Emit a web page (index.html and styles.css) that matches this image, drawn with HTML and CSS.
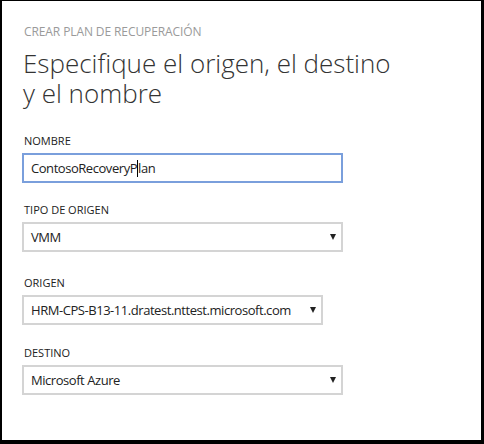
FILE: index.html
```html
<!DOCTYPE html>
<html lang="es">
<head>
<meta charset="utf-8">
<title>Crear plan de recuperación</title>
<link rel="stylesheet" href="styles.css">
</head>
<body>
<div class="frame">
  <div class="eyebrow">CREAR PLAN DE RECUPERACIÓN</div>
  <h1 class="title">Especifique el origen, el destino<br>y el nombre</h1>

  <div class="field f-nombre">
    <div class="label">NOMBRE</div>
    <div class="input focused">ContosoRecoveryP<span class="caret"></span>lan</div>
  </div>

  <div class="field f-tipo">
    <div class="label">TIPO DE ORIGEN</div>
    <div class="select"><span>VMM</span><span class="arrow"></span></div>
  </div>

  <div class="field f-origen">
    <div class="label">ORIGEN</div>
    <div class="select narrow"><span>HRM-CPS-B13-11.dratest.nttest.microsoft.com</span><span class="arrow"></span></div>
  </div>

  <div class="field f-destino">
    <div class="label">DESTINO</div>
    <div class="select"><span>Microsoft Azure</span><span class="arrow"></span></div>
  </div>
</div>
</body>
</html>
```

FILE: styles.css
```css
html, body {
  margin: 0;
  padding: 0;
  background: #000;
}
body {
  width: 484px;
  height: 444px;
  font-family: "Open Sans", "Noto Sans", sans-serif;
}
.frame {
  box-sizing: border-box;
  width: 484px;
  height: 444px;
  background: #fff;
  border-style: solid;
  border-color: #000;
  border-width: 1px 3px 4px 2px;
  padding: 24px 20px 0 20px;
}
.eyebrow {
  font-size: 12px;
  color: #9a9a9a;
  line-height: 14px;
  padding-left: 2px;
  letter-spacing: -0.1px;
}
.title {
  margin: 9px 0 0 0;
  font-weight: 300;
  font-size: 26px;
  line-height: 30px;
  color: #333;
  padding-left: 1px;
  letter-spacing: 0;
}
.f-nombre { margin-top: 26px; }
.f-tipo { margin-top: 20px; }
.f-origen { margin-top: 24px; }
.f-destino { margin-top: 21px; }
.label {
  font-size: 11px;
  line-height: 14px;
  color: #222;
  padding-left: 2px;
  margin-bottom: 5px;
}
.input, .select {
  box-sizing: border-box;
  width: 321px;
  height: 30px;
  border: 2px solid #d4d4d4;
  display: flex;
  align-items: center;
  padding: 0 5px 0 7px;
  font-size: 13px;
  letter-spacing: -0.45px;
  color: #222;
  white-space: nowrap;
}
.input.focused {
  border-color: #7a9fdc;
}
.select {
  justify-content: space-between;
}
.select.narrow {
  width: 301px;
}
.arrow {
  width: 0;
  height: 0;
  border-left: 3.5px solid transparent;
  border-right: 3.5px solid transparent;
  border-top: 6px solid #222;
  flex: none;
}
.caret {
  display: inline-block;
  width: 1px;
  height: 17px;
  background: #000;
}
```
